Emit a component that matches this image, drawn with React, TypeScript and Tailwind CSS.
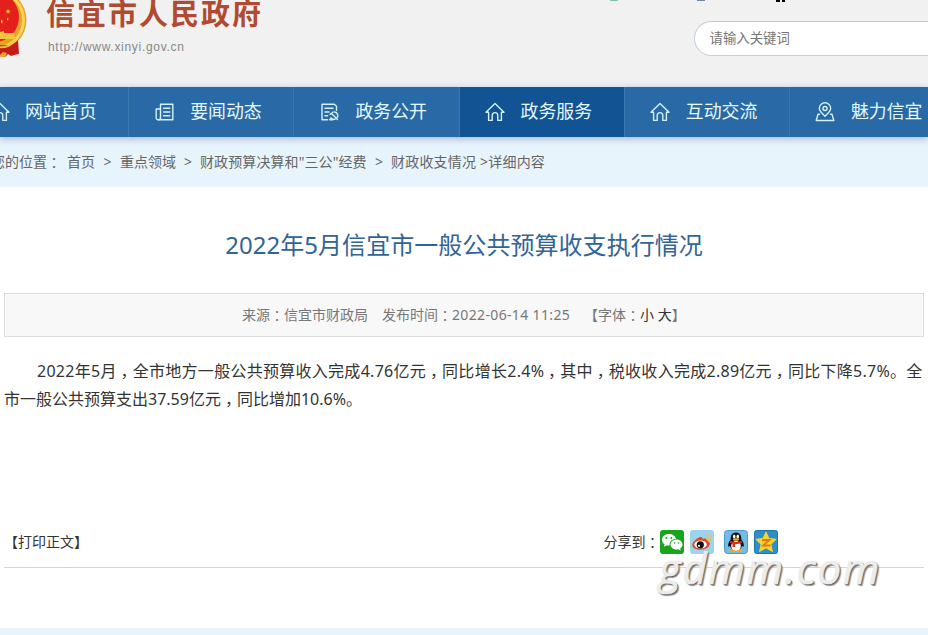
import React from 'react'

type NavProps = {
  name: string
  icon: 'home' | 'news' | 'doc' | 'place'
  active?: boolean
}

const navItems: NavProps[] = [
  { name: '网站首页', icon: 'home' },
  { name: '要闻动态', icon: 'news' },
  { name: '政务公开', icon: 'doc' },
  { name: '政务服务', icon: 'home', active: true },
  { name: '互动交流', icon: 'home' },
  { name: '魅力信宜', icon: 'place' },
]

const NavIcon = ({ icon }: { icon: NavProps['icon'] }) => (
  <svg viewBox="0 0 20 20" className="h-5 w-5 shrink-0" fill="none" stroke="#d3f1fb" strokeWidth="1.4" strokeLinejoin="round" strokeLinecap="round">
    {icon === 'home' && <path d="M1 10.2 10 1.6l9 8.6h-2.6v8.2h-3.6v-5a2.8 2.8 0 0 0-5.6 0v5H3.6v-8.2z" />}
    {icon === 'news' && (
      <>
        <path d="M5.5 2.2h12.3v15.6H3.2a2 2 0 0 1-2-2V7h4.3z" />
        <path d="M5.5 7v8.8a2 2 0 0 1-2 2M8.5 6.2h6.3M8.5 10h6.3M8.5 13.8h6.3" />
      </>
    )}
    {icon === 'doc' && (
      <>
        <path d="M16.5 8.5V4.2l-2.2-2H2v15.6h5.5M5 6.3h8M5 10h4M5 13.8h2.5" />
        <path d="m10 12.5 3-2.5M11.5 11.5l6 6" />
        <path d="M14.5 10c3.5.5 4.5 4.5 1.8 6.5-2 1.3-4.3.8-5.3-.5l-1.3 1.8h3" />
      </>
    )}
    {icon === 'place' && (
      <>
        <path d="M10 14.2C6.5 11 4.3 9 4.3 6.5a5.7 5.7 0 0 1 11.4 0c0 2.500-2.200 4.500-5.700 7.700z" />
        <circle cx="10" cy="6.5" r="2" />
        <path d="M4.5 12.2H3L1.2 18.5h17.6L17 12.2h-1.5" />
      </>
    )}
  </svg>
)

// punctuation that sits in the middle of its full-width cell
const Mid = ({ children }: { children: React.ReactNode }) => (
  <span className="inline-block w-[1em] text-center [font-feature-settings:'halt']">{children}</span>
)

const Emblem = () => (
  <svg viewBox="0 0 30 60" className="h-[60px] w-[30px] shrink-0">
    <ellipse cx="-3" cy="20" rx="29.5" ry="30" fill="#e6a223" />
    <ellipse cx="-3" cy="20" rx="26.5" ry="27.5" fill="none" stroke="#f9d45c" strokeWidth="3" />
    <ellipse cx="-5" cy="17" rx="24" ry="25" fill="#e3201b" />
    <path d="m8 9 .8 1.5 1.700.2-1.200 1.200.3 1.700L8 12.800l-1.500.8.3-1.700-1.200-1.200 1.700-.2zM7 17l.6 1.200 1.400.2-1 1 .2 1.400L7 20.200zM1 19l.8 1.500 1.700.2-1.200 1.200.3 1.700L1 22.800z" fill="#f6bd2c" />
    <path d="M0 32l4-1v2h10v3l2 1v2H0z" fill="#f6c33c" />
    <path d="M0 45c9 1 15-1 18-5l1 14-5 1-3 1-3-2-3 3-5-1z" fill="#c81b16" />
    <path d="M0 47c6 1 12-2 15-6" fill="none" stroke="#f4c23a" strokeWidth="2" />
    <path d="M0 55l3-3 4 1-2 4-5-.5z" fill="#eda92c" />
  </svg>
)

const Wechat = () => (
  <svg viewBox="0 0 24 24" className="h-6 w-6">
    <rect width="24" height="24" rx="3" fill="#17a51b" />
    <path d="M9 4C5 4 2 6.500 2 9.800c0 1.900 1 3.500 2.600 4.600L4 16.800l2.700-1.500c1 .3 2 .3 3 .2C9 11.500 12.500 8.700 16 9c-.6-3-3.500-5-7-5z" fill="#fff" />
    <path d="M16.500 9.500c-3.500 0-6 2.200-6 5s2.600 5 6 5c.7 0 1.400-.1 2-.3l2.300 1.200-.6-2c1.400-1 2.300-2.300 2.300-3.900 0-2.800-2.600-5-6-5z" fill="#fff" />
    <g fill="#17a51b"><circle cx="6.5" cy="8" r="1" /><circle cx="11.3" cy="8" r="1" /><circle cx="14.5" cy="13" r=".8" /><circle cx="18.5" cy="13" r=".8" /></g>
  </svg>
)

const Weibo = () => (
  <svg viewBox="0 0 24 24" className="h-6 w-6">
    <rect width="24" height="24" rx="3" fill="#9ed3ea" />
    <path d="M9 7.500c2-1 4 0 3.500 1.500 3-1 5.500-.5 5 2 2.500 1 3 3 1.500 5-3 5-15 5-16.500 0C1.300 13.500 5 9.500 9 7.500z" fill="#d94a28" />
    <ellipse cx="10.5" cy="14.5" rx="6.3" ry="4" fill="#fff" />
    <circle cx="10.3" cy="14.8" r="3.6" fill="#111" />
    <circle cx="9" cy="15.8" r="1.1" fill="#fff" />
    <path d="M16 9c1.500-.4 2.500.5 2.300 2M15.500 5.500c3.500-1 6.500 1.500 5.500 5.500" fill="none" stroke="#e9c65c" strokeWidth="1.5" />
  </svg>
)

const QQ = () => (
  <svg viewBox="0 0 24 24" className="h-6 w-6">
    <rect x=".5" y=".5" width="23" height="23" rx="3" fill="#74bce6" stroke="#4b9bcd" />
    <path d="M12 2.500c-4 0-5.500 3-5.300 7C4.500 12 3.500 15 4.500 17c.5 0 1-.6 1.500-1.200 1 6 11 6 12 0 .5.6 1 1.200 1.500 1.200 1-2 0-5-2.200-7.500.200-4-1.300-7-5.300-7z" fill="#111" />
    <ellipse cx="12" cy="16" rx="4.8" ry="5" fill="#fff" />
    <ellipse cx="10.2" cy="6.5" rx="1.3" ry="1.9" fill="#fff" /><ellipse cx="13.8" cy="6.5" rx="1.3" ry="1.9" fill="#fff" />
    <ellipse cx="12" cy="9.5" rx="3.2" ry="1.2" fill="#f7a81b" />
    <path d="M6.500 10.500c3 2 8 2 11 0l.5 2.200c-2 1-4.500 1.500-7 1.400V17H8.500v-3.300L6 12.700z" fill="#e02a1f" />
    <ellipse cx="8.5" cy="21" rx="3" ry="1.3" fill="#f7a81b" /><ellipse cx="15.5" cy="21" rx="3" ry="1.3" fill="#f7a81b" />
  </svg>
)

const Qzone = () => (
  <svg viewBox="0 0 24 24" className="h-6 w-6">
    <rect x=".5" y=".5" width="23" height="23" rx="2" fill="#2b8fcb" stroke="#1f77b0" />
    <path d="m12 2 3 6.500 7.200.8-5.300 5 1.500 7.200-6.400-3.600-6.400 3.600 1.500-7.200-5.300-5L9 8.500z" fill="#fcd22d" stroke="#fcd22d" strokeLinejoin="round" />
    <path d="M8 10h7.500l-6.500 5.500h7.500" fill="none" stroke="#dd7a15" strokeWidth="1.8" />
  </svg>
)

const App = () => {
  return (
    <div className="h-[635px] w-[928px] overflow-hidden bg-white font-['Noto_Sans','Noto_Sans_CJK_SC',sans-serif] text-sm text-[#666]">
      <header className="flex h-[87px] justify-between border-b-2 border-[#e8f4fb] bg-[#f1f1f1]">
        <div className="flex">
          <Emblem />
          <div className="pl-4">
            <h1 className="h-[37px] whitespace-nowrap text-[29px] leading-[28px] font-bold tracking-[2px] text-[#b04a30]">信宜市人民政府</h1>
            <p className="pl-0.5 font-['Liberation_Sans',sans-serif] text-xs leading-5 tracking-[0.7px] text-[#888]">http://www.xinyi.gov.cn</p>
          </div>
        </div>
        <div className="w-[328px]">
          <div className="flex h-[21px] items-start pl-[10px]">
            <span className="h-px w-2 rounded-b bg-[#7fbcae]" />
            <span className="ml-[79px] h-px w-2 bg-[#668dad]" />
            <span className="ml-[71px] h-0.5 w-1 bg-black" />
            <span className="ml-0.5 h-0.5 w-[3px] bg-black" />
          </div>
          <div className="ml-[94px] h-[35px] rounded-l-full border border-r-0 border-[#c3cedd] bg-white pl-[14.5px] text-[13.4px] leading-[33px] text-[#777]">请输入关键词</div>
        </div>
      </header>

      <nav className="relative flex h-[50px] bg-[#2969a5] shadow-[0_2px_7px_rgba(60,90,150,0.4)]">
        <div className="-ml-[36px] flex shrink-0">
          {navItems.map((item) => (
            <a key={item.name} className={`flex w-[165.2px] shrink-0 items-center gap-[15.5px] border-r border-[#3c78b0] pl-[25.5px] text-lg text-[#e4faff] ${item.active ? 'bg-[#125393]' : ''}`}>
              <NavIcon icon={item.icon} />
              <span className="pb-px text-[17.9px] whitespace-nowrap">{item.name}</span>
            </a>
          ))}
        </div>
      </nav>

      <div className="flex h-[50px] items-center bg-[#e8f4fc] whitespace-pre">
        <span className="-ml-[9px] w-[76px]">您的位置<Mid>：</Mid></span>
        <span className="w-7">首页</span>
        <span className="w-[25px] text-center">&gt;</span>
        <span className="w-14">重点领域</span>
        <span className="w-6 text-center">&gt;</span>
        <span className="w-[167px] tracking-[0.1px]">财政预算决算和"三公"经费</span>
        <span className="w-6 text-center">&gt;</span>
        <span className="tracking-[0.2px]">财政收支情况 &gt;详细内容</span>
      </div>

      <main className="px-1">
        <h2 className="pt-10 text-center text-2xl leading-9 tracking-[0.05px] text-[#326496]">2022年5月信宜市一般公共预算收支执行情况</h2>
        <div className="mt-[30px] flex h-11 items-center border border-[#dcdcdc] bg-[#f8f8f8] pl-[237px] whitespace-nowrap text-[#777]">
          <span className="w-[140px]">来源<Mid>：</Mid>信宜市财政局</span>
          <span className="w-[202px]">发布时间<Mid>：</Mid><span className="tracking-[0.35px]">2022-06-14 11:25</span></span>
          <span>【字体<Mid>：</Mid><span className="text-[#333]">小 大</span>】</span>
        </div>
        <div className="mt-5 text-base leading-7 whitespace-nowrap text-[#333]">
          <p className="pl-[33px] tracking-[0.28px]">2022年5月<Mid>，</Mid>全市地方一般公共预算收入完成4.76亿元<Mid>，</Mid>同比增长2.4%<Mid>，</Mid>其中<Mid>，</Mid>税收收入完成2.89亿元<Mid>，</Mid>同比下降5.7%。全</p>
          <p>市一般公共预算支出37.59亿元<Mid>，</Mid>同比增加10.6%。</p>
        </div>
        <div className="relative mt-[103px] flex h-[52px] items-center border-b border-[#d5d5d5] text-[#333]">
          <span className="w-[599.5px]">【打印正文】</span>
          <span className="w-[56.5px] whitespace-nowrap">分享到<Mid>：</Mid></span>
          <Wechat />
          <span className="w-1.5" />
          <Weibo />
          <span className="w-2.5" />
          <QQ />
          <span className="w-1.5" />
          <Qzone />
          <span className="absolute top-[27px] left-[655px] font-['Open_Sans',sans-serif] text-[42px] leading-[50px] font-medium tracking-[1.6px] text-[#ececec] italic [-webkit-text-stroke:0.7px_#ececec] [text-shadow:1px_1px_1px_#555,2px_2px_1px_#999]">gdmm.com</span>
        </div>
      </main>
      <footer className="mt-[60px] h-[7px] bg-[#e8f4fc]" />
    </div>
  )
}

export default App
